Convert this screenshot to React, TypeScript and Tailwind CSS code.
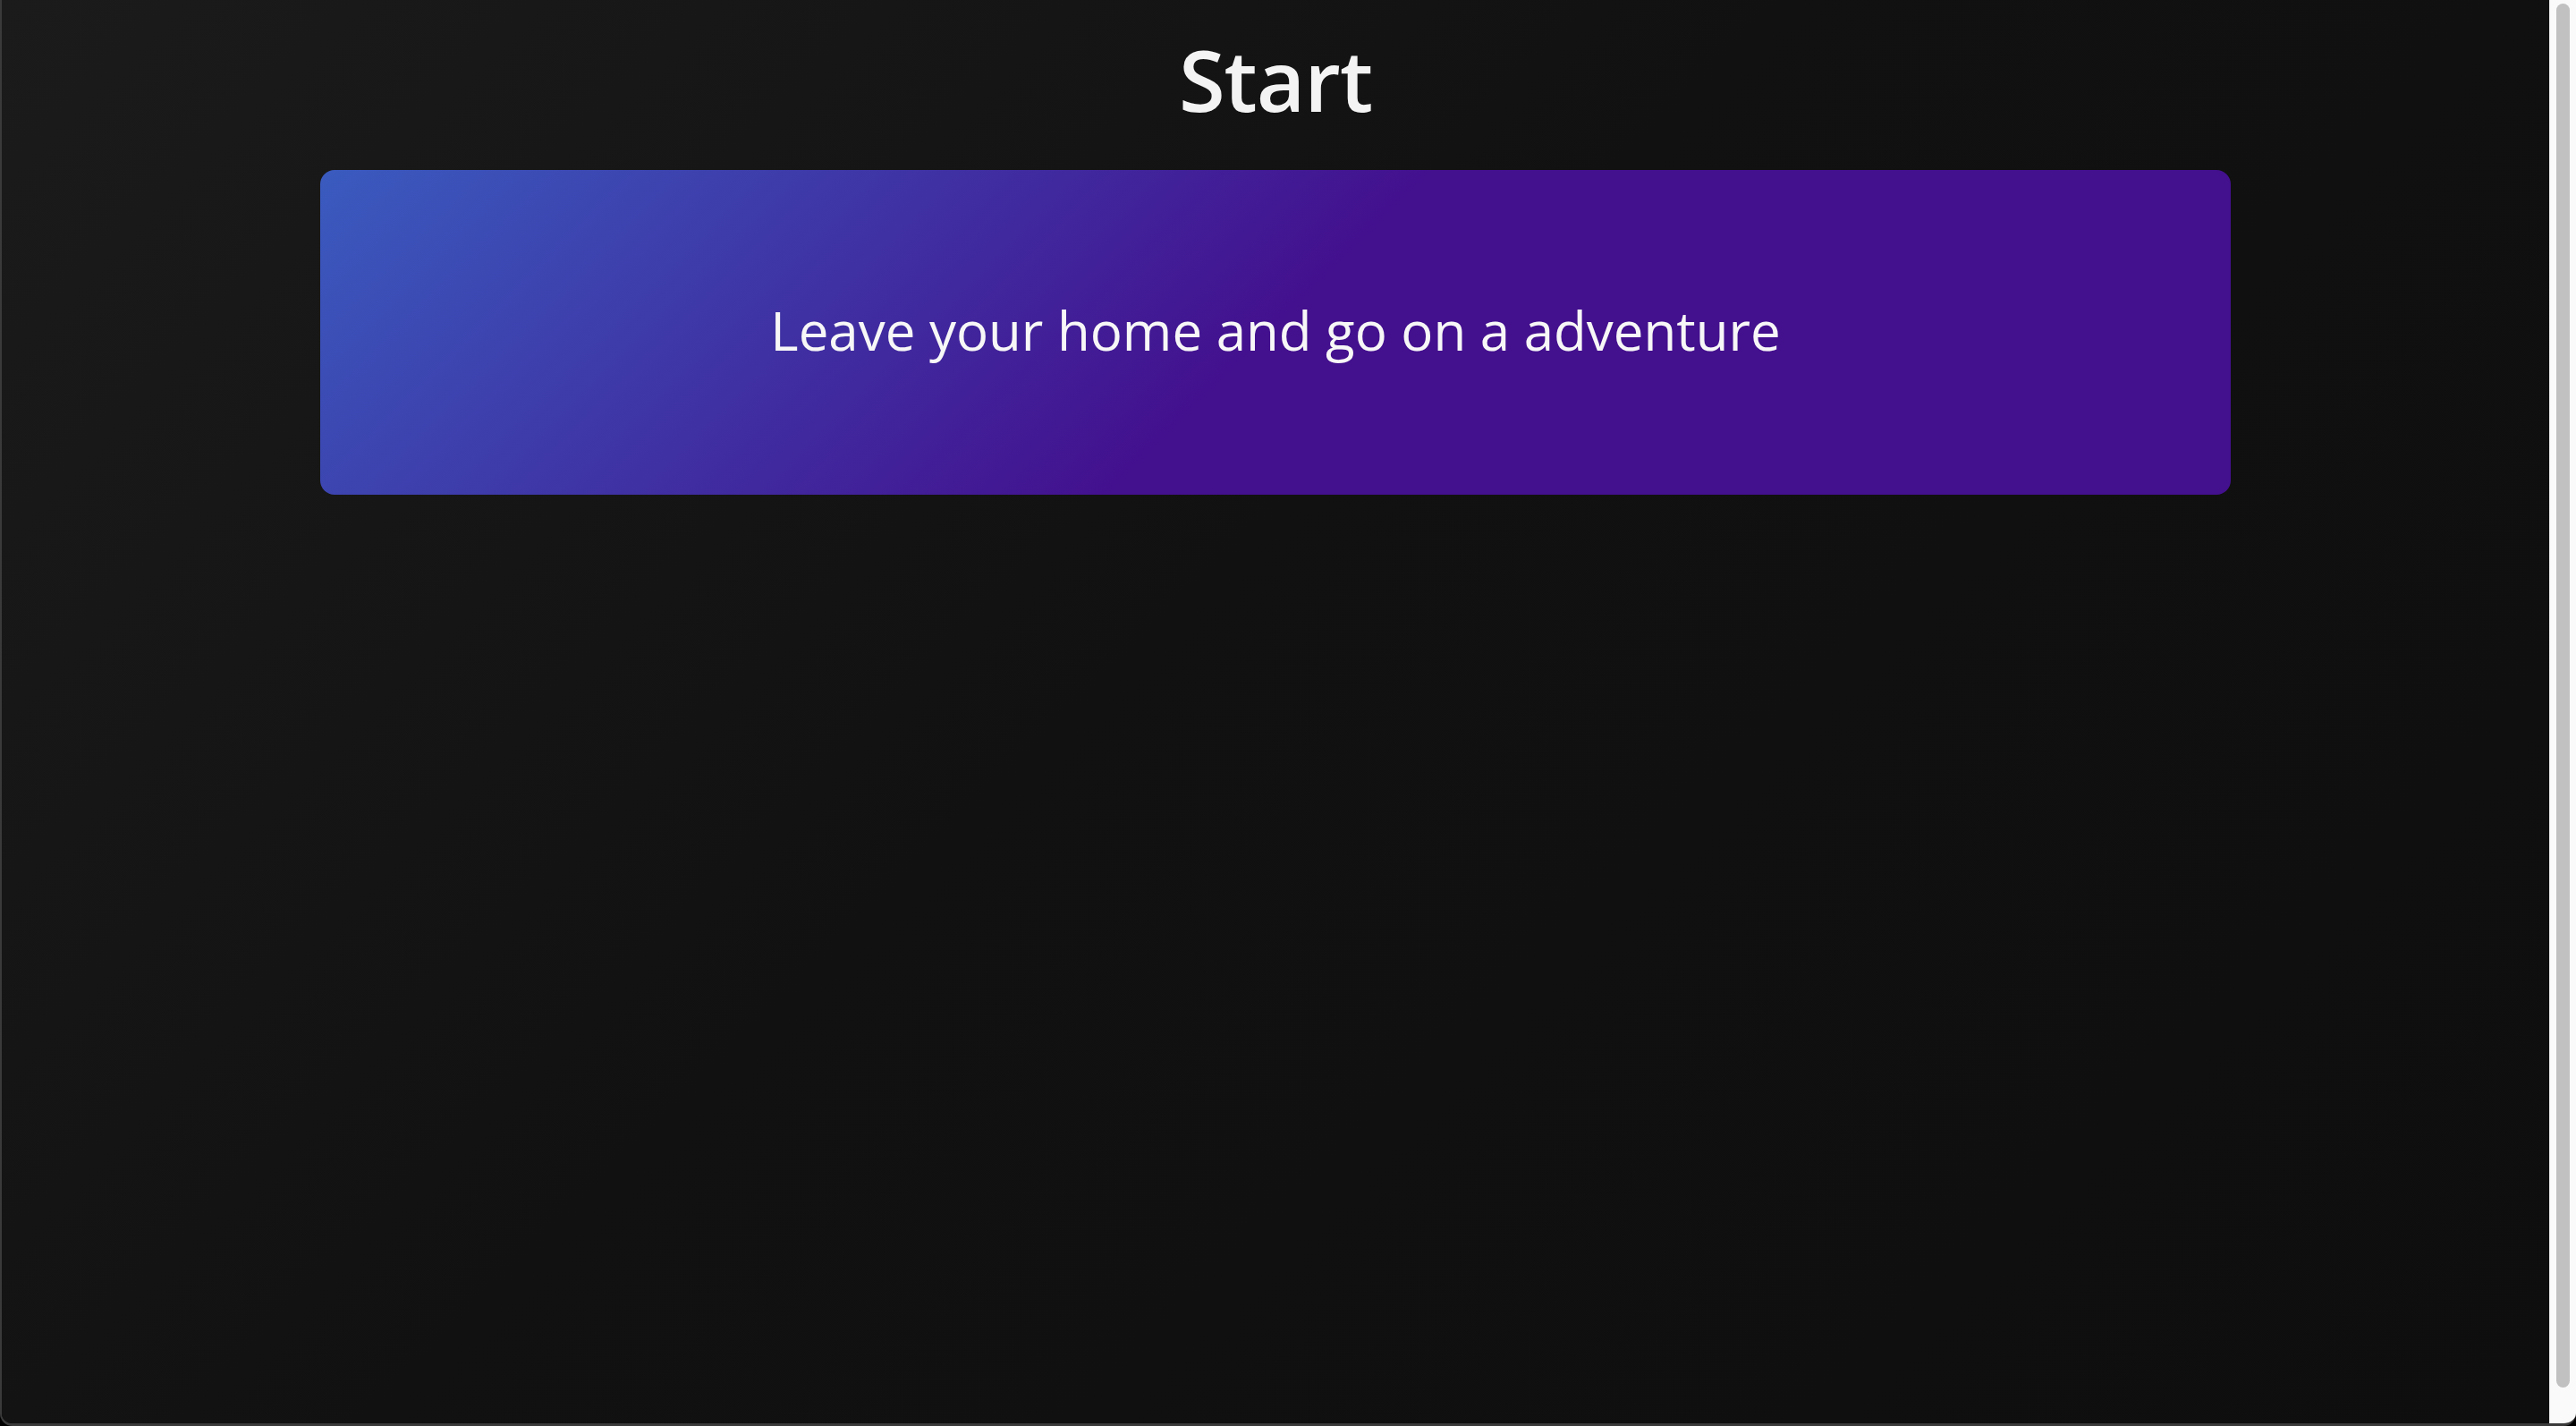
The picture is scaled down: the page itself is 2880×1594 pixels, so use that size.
export default function App() {
  return (
    <div className="h-screen w-full bg-black">
      <div className="flex h-full w-full overflow-hidden rounded-b-[14px] border-b-[3px] border-l-2 border-[#3a3a3a]">
        <main className="flex-1 bg-[linear-gradient(135deg,#1b1b1b_0%,#111111_45%,#0e0e0e_100%)] font-['Open_Sans','Noto_Sans',sans-serif]">
          <h1 className="mt-[42px] text-center text-[94px] font-semibold leading-none tracking-[-1px] text-[#f3f3f3]">Start</h1>
          <section className="mx-auto mt-[54px] flex h-[363px] w-3/4 items-center justify-center rounded-2xl bg-[linear-gradient(135deg,#3a5bbf_0%,#43108e_50%,#43108e_100%)] pb-[6px]">
            <p className="text-6xl font-medium text-[#f7f7f7]">Leave your home and go on a adventure</p>
          </section>
        </main>
        <div className="flex w-[30px] shrink-0 justify-center border-l border-[#e8e8e8] bg-[#fafafa] pt-[4px] pb-[40px]">
          <div className="h-full w-[15px] rounded-full bg-[#c1c1c1]" />
        </div>
      </div>
    </div>
  );
}
